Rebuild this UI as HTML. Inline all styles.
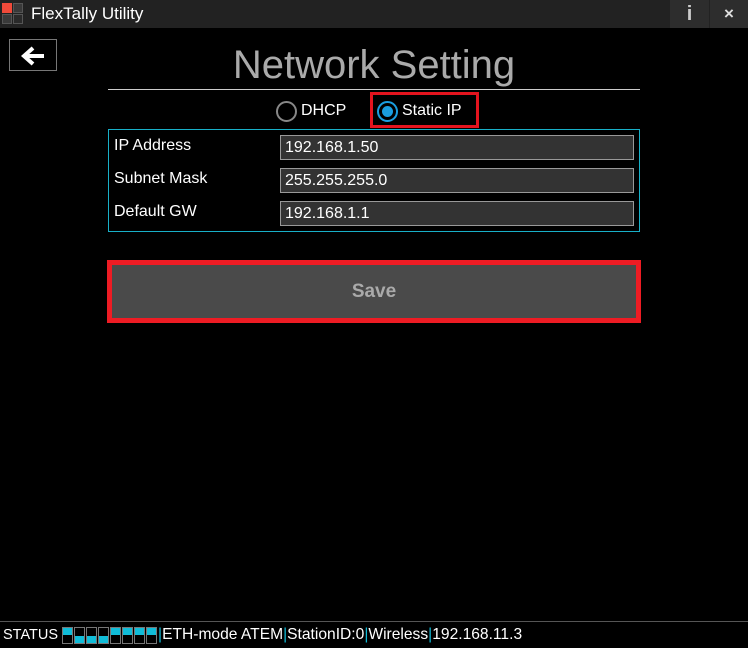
<!DOCTYPE html>
<html><head><meta charset="utf-8"><style>
*{margin:0;padding:0;box-sizing:border-box}
body{width:748px;height:648px;background:#000;position:relative;overflow:hidden;font-family:"Liberation Sans",sans-serif;color:#fff}
.abs{position:absolute}
.tb{left:0;top:0;width:748px;height:28px;background:#222}
.inp{position:absolute;left:280px;width:354px;height:25px;background:#333;border:1px solid #999;font-size:16px;padding:3px 4px;color:#fff}
.lbl{position:absolute;left:114px;font-size:16px;color:#fff}
.sq{position:absolute;top:627px;width:11px;height:17px;border:1px solid #777}
.sq i{position:absolute;left:0;width:9px;height:7px;background:#10bcd8}
.sep{color:#10bcd8}
</style></head><body>
<div class="abs tb"></div>
<div class="abs" style="left:2px;top:3px;width:10px;height:10px;background:#f04a3a"></div>
<div class="abs" style="left:13px;top:3px;width:10px;height:10px;background:#3a3a3a;border:1px solid #555"></div>
<div class="abs" style="left:2px;top:14px;width:10px;height:10px;background:#3a3a3a;border:1px solid #555"></div>
<div class="abs" style="left:13px;top:14px;width:10px;height:10px;background:#2a2a2a;border:1px solid #555"></div>
<div class="abs" style="left:31px;top:4px;font-size:17px;color:#fff">FlexTally Utility</div>
<div class="abs" style="left:670px;top:0;width:39px;height:28px;background:#2d2d2d;text-align:center;font-size:20px;line-height:28px;color:#ccc;font-weight:bold">i</div>
<div class="abs" style="left:710px;top:0;width:38px;height:28px;background:#2d2d2d;text-align:center;font-size:17px;line-height:28px;color:#ddd;font-weight:bold">×</div>

<div class="abs" style="left:9px;top:39px;width:48px;height:32px;border:1px solid #777"></div>
<svg class="abs" style="left:20px;top:45px" width="26" height="22" viewBox="0 0 26 22"><path d="M24 11H5M13 3L4 11L13 19" stroke="#fff" stroke-width="4" fill="none"/></svg>

<div class="abs" style="left:0;width:748px;top:43px;text-align:center;font-size:40px;color:#aaa">Network Setting</div>
<div class="abs" style="left:108px;top:89px;width:532px;height:1px;background:#ccc"></div>

<div class="abs" style="left:276px;top:101px;width:21px;height:21px;border:2px solid #888;border-radius:50%"></div>
<div class="abs" style="left:301px;top:102px;font-size:16px">DHCP</div>
<div class="abs" style="left:370px;top:92px;width:109px;height:36px;border:3px solid #e4141e"></div>
<div class="abs" style="left:377px;top:101px;width:21px;height:21px;border:2px solid #1a9ee0;border-radius:50%"><div style="position:absolute;left:3px;top:3px;width:11px;height:11px;border-radius:50%;background:#1a9ee0"></div></div>
<div class="abs" style="left:402px;top:102px;font-size:16px">Static IP</div>

<div class="abs" style="left:108px;top:129px;width:532px;height:103px;border:1px solid #18b0c8"></div>
<div class="lbl" style="top:137px">IP Address</div>
<div class="lbl" style="top:170px">Subnet Mask</div>
<div class="lbl" style="top:203px">Default GW</div>
<div class="inp" style="top:135px">192.168.1.50</div>
<div class="inp" style="top:168px">255.255.255.0</div>
<div class="inp" style="top:201px">192.168.1.1</div>

<div class="abs" style="left:107px;top:260px;width:534px;height:63px;border:5px solid #ee1c24;background:#4a4a4a;text-align:center;line-height:53px;font-size:19px;font-weight:bold;color:#aaa">Save</div>

<div class="abs" style="left:0;top:621px;width:748px;height:1px;background:#555"></div>
<div class="abs" style="left:3px;top:627px;font-size:14.5px">STATUS</div>
<div class="sq" style="left:62px"><i style="top:0"></i></div>
<div class="sq" style="left:74px"><i style="top:8px"></i></div>
<div class="sq" style="left:86px"><i style="top:8px"></i></div>
<div class="sq" style="left:98px"><i style="top:8px"></i></div>
<div class="sq" style="left:110px"><i style="top:0"></i></div>
<div class="sq" style="left:122px"><i style="top:0"></i></div>
<div class="sq" style="left:134px"><i style="top:0"></i></div>
<div class="sq" style="left:146px"><i style="top:0"></i></div>
<div class="abs" style="left:158px;top:626px;font-size:15.6px;white-space:nowrap"><span class="sep">|</span>ETH-mode ATEM<span class="sep">|</span>StationID:0<span class="sep">|</span>Wireless<span class="sep">|</span>192.168.11.3</div>
</body></html>
